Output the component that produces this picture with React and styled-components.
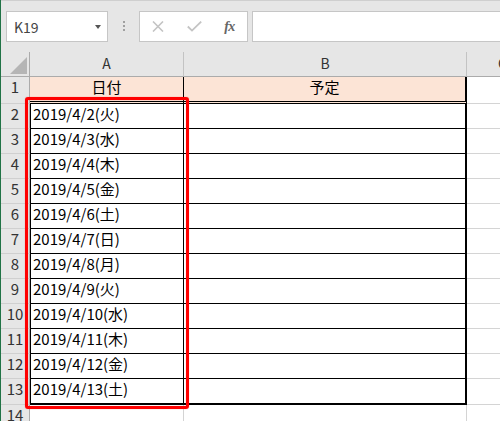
import React from 'react';
import styled, { createGlobalStyle } from 'styled-components';

const Global = createGlobalStyle`
  html, body { margin: 0; padding: 0; background: #fff; }
  body { font-family: "Noto Sans CJK JP", "Noto Sans", sans-serif; }
`;

const Frame = styled.div`
  width: 500px;
  height: 421px;
  overflow: hidden;
  box-sizing: border-box;
  border-left: 1px solid #217346;
  background: #fff;
`;

const Toolbar = styled.div`
  height: 52px;
  box-sizing: border-box;
  border-top: 1px solid #cfcfcf;
  background: #e6e6e6;
  display: flex;
  align-items: flex-start;
  padding: 10px 0 0 5px;
`;

const Box = styled.div`
  box-sizing: border-box;
  height: 31px;
  background: #fff;
  border: 1px solid #c6c6c6;
  display: flex;
  align-items: center;
`;

const NameBox = styled(Box)`
  width: 102px;
  justify-content: space-between;
  padding: 0 6px 0 7px;
  font-size: 14px;
  color: #444;
`;

const Caret = styled.span`
  width: 0;
  height: 0;
  border-left: 3px solid transparent;
  border-right: 3px solid transparent;
  border-top: 4px solid #555;
  margin-top: 1px;
`;

const Dots = styled.div`
  width: 31px;
  display: flex;
  flex-direction: column;
  align-items: center;
  gap: 2px;
  margin-top: 10px;
`;

const Dot = styled.span`
  width: 2px;
  height: 2px;
  background: #a0a0a0;
`;

const ButtonsBox = styled(Box)`
  width: 109px;
  padding-left: 0;
`;

const Slot = styled.div`
  width: ${p => p.$w}px;
  height: 100%;
  display: flex;
  align-items: center;
  justify-content: center;
`;

const Fx = styled.span`
  font-family: "Liberation Serif", "DejaVu Serif", serif;
  font-style: italic;
  font-weight: bold;
  font-size: 14px;
  color: #666;
  letter-spacing: -0.5px;
`;

const FormulaInput = styled(Box)`
  flex: 1;
  margin-left: 4px;
  margin-right: -6px;
`;

const Sheet = styled.div`
  position: relative;
  display: grid;
  grid-template-columns: 29px 154px 283px 72px;
  grid-template-rows: 25px 27px repeat(11, 25px) 26px 25px;
  width: max-content;
`;

const HeadBase = styled.div`
  box-sizing: border-box;
  background: #e6e6e6;
  color: #333;
  text-align: center;
  white-space: nowrap;
  overflow: hidden;
`;

const Corner = styled(HeadBase)`
  border-right: 1px solid #ababab;
  border-bottom: 1px solid #ababab;
  display: flex;
  justify-content: flex-end;
  align-items: flex-end;
  padding: 0 2px 2px 0;
`;

const ColHead = styled(HeadBase)`
  border-right: 1px solid #c3c3c3;
  border-bottom: 1px solid #ababab;
  font-size: 14px;
  line-height: 20px;
  padding-top: 1px;
`;

const RowHead = styled(HeadBase)`
  border-right: 1px solid #ababab;
  border-bottom: 1px solid #d0d0d0;
  font-size: 15px;
  line-height: 20px;
`;

const RIGHT = {
  thin: '1px solid #000',
  thick: '2px solid #000',
  grid: '1px solid #d4d4d4',
};

const BOTTOM = {
  thin: '1px solid #000',
  double: '3px double #000',
  thick: '2px solid #000',
  grid: '1px solid #d4d4d4',
};

const Cell = styled.div`
  box-sizing: border-box;
  background: ${p => (p.$pink ? '#fce4d6' : '#fff')};
  border-left: ${p => (p.$left ? '1px solid #000' : 'none')};
  border-right: ${p => RIGHT[p.$right]};
  border-bottom: ${p => BOTTOM[p.$bottom]};
  font-size: 15px;
  line-height: 20px;
  color: #000;
  text-align: ${p => (p.$center ? 'center' : 'left')};
  padding-left: ${p => (p.$center ? '0' : '2px')};
  white-space: nowrap;
  overflow: hidden;
`;

const Highlight = styled.div`
  position: absolute;
  left: 24px;
  top: 45px;
  width: 164px;
  height: 312px;
  box-sizing: border-box;
  border: 3px solid #ff0000;
  border-radius: 3px;
  box-shadow: 0 0 1px rgba(255, 0, 0, 0.6), inset 0 0 1px rgba(255, 0, 0, 0.6);
  pointer-events: none;
`;

const dates = [
  '2019/4/2(火)',
  '2019/4/3(水)',
  '2019/4/4(木)',
  '2019/4/5(金)',
  '2019/4/6(土)',
  '2019/4/7(日)',
  '2019/4/8(月)',
  '2019/4/9(火)',
  '2019/4/10(水)',
  '2019/4/11(木)',
  '2019/4/12(金)',
  '2019/4/13(土)',
];

export default function App() {
  return (
    <>
      <Global />
      <Frame>
        <Toolbar>
          <NameBox>
            <span>K19</span>
            <Caret />
          </NameBox>
          <Dots>
            <Dot />
            <Dot />
            <Dot />
          </Dots>
          <ButtonsBox>
            <Slot $w={36}>
              <svg width="12" height="11" viewBox="0 0 12 11">
                <path d="M1 0.5 L11 10.5 M11 0.5 L1 10.5" stroke="#c4c4c4" strokeWidth="1.6" fill="none" />
              </svg>
            </Slot>
            <Slot $w={36}>
              <svg width="15" height="11" viewBox="0 0 15 11">
                <path d="M0.8 5.5 L5 9.6 L14.2 0.6" stroke="#c4c4c4" strokeWidth="1.8" fill="none" />
              </svg>
            </Slot>
            <Slot $w={35}>
              <Fx>fx</Fx>
            </Slot>
          </ButtonsBox>
          <FormulaInput />
        </Toolbar>
        <Sheet>
          <Corner>
            <svg width="17" height="17" viewBox="0 0 17 17">
              <polygon points="17,0 17,17 0,17" fill="#b5b5b5" />
            </svg>
          </Corner>
          <ColHead>A</ColHead>
          <ColHead>B</ColHead>
          <ColHead>C</ColHead>

          <RowHead>1</RowHead>
          <Cell $pink $center $right="thin" $bottom="double">日付</Cell>
          <Cell $pink $center $right="thick" $bottom="double">予定</Cell>
          <Cell $right="grid" $bottom="grid" />

          {dates.map((d, i) => {
            const last = i === dates.length - 1;
            const b = last ? 'thick' : 'thin';
            return (
              <React.Fragment key={d}>
                <RowHead>{i + 2}</RowHead>
                <Cell $left $right="thin" $bottom={b}>{d}</Cell>
                <Cell $right="thick" $bottom={b} />
                <Cell $right="grid" $bottom="grid" />
              </React.Fragment>
            );
          })}

          <RowHead>14</RowHead>
          <Cell $right="grid" $bottom="grid" />
          <Cell $right="grid" $bottom="grid" />
          <Cell $right="grid" $bottom="grid" />

          <Highlight />
        </Sheet>
      </Frame>
    </>
  );
}
